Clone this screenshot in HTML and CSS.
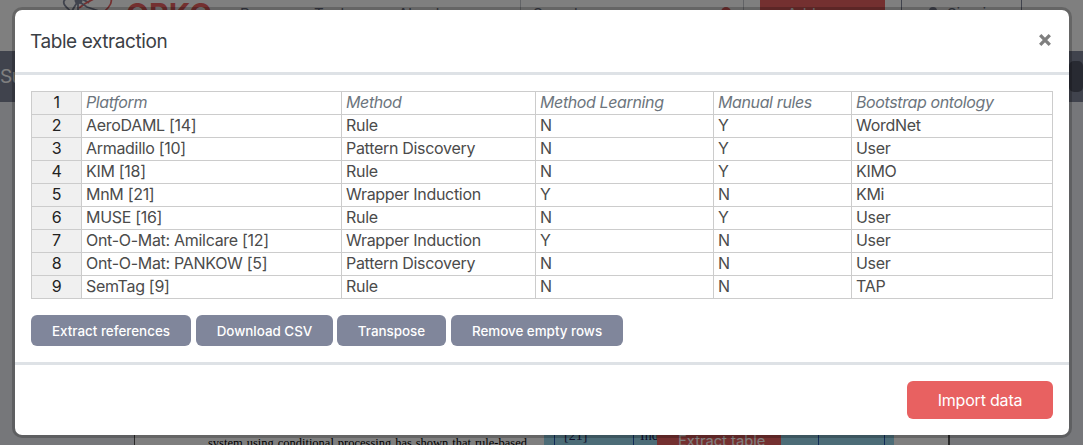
FILE: index.html
```html
<!DOCTYPE html>
<html lang="en">
<head>
<meta charset="utf-8">
<title>Table extraction</title>
<link rel="stylesheet" href="styles.css">
</head>
<body>
<div class="page">
  <header class="header">
    <svg class="logo" viewBox="0 0 52 30" width="52" height="30" fill="none" stroke-width="1.8">
      <path d="M27 3C17-4 5-5 2 1c-2 5 9 13 21 17" stroke="#80869b"/>
      <path d="M17 8C31-3 46-7 49-1c2 5-4 11-12 17" stroke="#e86161"/>
      <path d="M16 1l9 6 15 5M16 1L8 14M16 1v10" stroke="#80869b"/>
      <circle cx="16.500" cy="0" r="4" fill="#80869b"/>
    </svg>
    <span class="brand">ORKG</span>
    <nav class="menu"><span class="papers">Papers</span><span class="tools">Tools</span><span>About</span></nav>
    <div class="search"><span>Search</span><i></i></div>
    <div class="add">Add paper</div>
    <div class="sign">
      <svg width="10" height="14" viewBox="0 0 10 14"><circle cx="5" cy="4" r="4" fill="#80869b"/><path d="M0 14q0-6 5-6t5 6" fill="#80869b"/></svg>
      <span>Sign in</span>
    </div>
  </header>
  <div class="toolbar"><span>Survey table extractor</span><span class="tool"></span></div>
  <main class="content">
    <div class="paper">
      <div class="article">
        <p class="first">rules [20], mostly performs better [13], and a rule</p>
        <p>system using conditional processing has shown that rule-based</p>
      </div>
      <div class="selection">
        <span class="ref">[21]</span><span class="ind">Ind</span><span class="extract">Extract table</span><span class="cell"></span><span class="last"></span>
      </div>
    </div>
  </main>
</div>
<div class="overlay">
  <section class="modal">
    <div class="modal-header">
      <h5>Table extraction</h5>
      <svg class="close" width="14" height="14" viewBox="0 0 14 14"><path d="M2.200 2.200l9.600 9.600M11.800 2.200l-9.600 9.600" stroke="#7f7f7f" stroke-width="3.300"/></svg>
    </div>
    <div class="modal-body">
      <table class="sheet">
        <colgroup><col class="c0"><col class="c1"><col class="c2"><col class="c3"><col class="c4"><col class="c5"></colgroup>
        <tr class="labels"><th>1</th><td>Platform</td><td>Method</td><td>Method Learning</td><td>Manual rules</td><td>Bootstrap ontology</td></tr>
        <tr><th>2</th><td>AeroDAML [14]</td><td>Rule</td><td>N</td><td>Y</td><td>WordNet</td></tr>
        <tr><th>3</th><td>Armadillo [10]</td><td>Pattern Discovery</td><td>N</td><td>Y</td><td>User</td></tr>
        <tr><th>4</th><td>KIM [18]</td><td>Rule</td><td>N</td><td>Y</td><td>KIMO</td></tr>
        <tr><th>5</th><td>MnM [21]</td><td>Wrapper Induction</td><td>Y</td><td>N</td><td>KMi</td></tr>
        <tr><th>6</th><td>MUSE [16]</td><td>Rule</td><td>N</td><td>Y</td><td>User</td></tr>
        <tr><th>7</th><td>Ont-O-Mat: Amilcare [12]</td><td>Wrapper Induction</td><td>Y</td><td>N</td><td>User</td></tr>
        <tr><th>8</th><td>Ont-O-Mat: PANKOW [5]</td><td>Pattern Discovery</td><td>N</td><td>N</td><td>User</td></tr>
        <tr><th>9</th><td>SemTag [9]</td><td>Rule</td><td>N</td><td>N</td><td>TAP</td></tr>
      </table>
      <div class="actions">
        <button class="b1">Extract references</button><button class="b2">Download CSV</button><button class="b3">Transpose</button><button class="b4">Remove empty rows</button>
      </div>
    </div>
    <div class="modal-footer"><button class="import">Import data</button></div>
  </section>
</div>
</body>
</html>
```
FILE: styles.css
```css
* { box-sizing: border-box; }
body { margin: 0; font-family: Inter, "Liberation Sans", sans-serif; overflow: hidden; }
button { border: 0; font-family: inherit; padding: 0; color: #fff; white-space: nowrap; }

.page { height: 445px; overflow: hidden; background: #edeff5; }
.header { display: flex; height: 51px; background: #fff; color: #70758a; font-size: 15px; line-height: 20px; }
.logo { margin-left: 62px; flex: none; }
.brand { margin-left: 12px; width: 114px; color: #e86161; font-size: 30px; font-weight: 700; line-height: 28px; }
.menu { display: flex; width: 280px; padding-top: 4px; }
.papers { width: 74px; }
.tools { width: 84px; }
.search { display: flex; justify-content: space-between; width: 224px; height: 30px; padding: 4px 12px; border: 1px solid #c4c6cd; border-top: 0; }
.search i { width: 10px; height: 10px; margin-top: 3px; border-radius: 50%; background: #e86161; }
.add { width: 125px; height: 30px; margin-left: 16px; padding: 4px 0 0 27px; background: #e86161; color: #fff; }
.sign { display: flex; gap: 9px; width: 121px; height: 30px; margin-left: 16px; padding: 4px 0 0 26px; border: 1px solid #80869b; border-top: 0; }
.sign svg { margin-top: 3px; }
.toolbar { display: flex; justify-content: space-between; height: 51px; padding-top: 10px; background: #80869b; color: #fff; font-size: 19px; letter-spacing: -.8px; line-height: 32px; }
.tool { width: 14px; height: 31px; border-radius: 5px; background: #505565; }
.content { height: 343px; padding-left: 134px; }
.paper { display: flex; width: 816px; height: 343px; padding: 319px 0 0 73px; border: solid #555; border-width: 0 2px 0 1px; background: #fff; }
.article { width: 336px; font: 14px/18px "Liberation Serif", serif; color: #000; }
.article p { margin: 0; white-space: nowrap; text-align: justify; text-align-last: justify; width: 319px; font-size: 12.500px; }
.article .first { padding-left: 20px; height: 13px; line-height: 13px; }
.selection { display: flex; width: 350px; height: 24px; background: #98d8ef; font: 14px/30px "Liberation Serif", serif; color: #225; }
.ref { width: 80px; flex: none; padding-left: 9px; margin-left: 10px; border: solid #2456b0; border-width: 0 1px; }
.ind { width: 23px; flex: none; padding-left: 6px; }
.extract { width: 124px; flex: none; padding-left: 21px; background: #e86161; color: #fff; font: 14.700px/40px Inter, sans-serif; white-space: nowrap; }
.cell { width: 38px; flex: none; border-right: 1px solid #2456b0; }
.last { width: 66px; flex: none; border-right: 1px solid #2456b0; }

.overlay { position: absolute; inset: 0; background: rgba(0, 0, 0, .5); padding: 7px 11px 7px 12px; }
.modal { width: 1060px; height: 431px; border: 3px solid rgba(0, 0, 0, .2); border-radius: 10px; background: #fff; background-clip: padding-box; }
.modal-header { display: flex; justify-content: space-between; height: 65px; padding: 16px 17px 0 16px; border-bottom: 3px solid #dee2e6; }
.modal-header h5 { margin: 0 0 0 -1px; font-size: 19px; letter-spacing: -.42px; line-height: 32px; font-weight: 400; color: #3b4045; }
.close { margin: 7px 0 0; }
.modal-body { height: 290px; padding: 16px 16px 0; border-bottom: 3px solid #dee2e6; }
.sheet { width: 1022px; table-layout: fixed; border-collapse: collapse; font-size: 16px; letter-spacing: -.3px; line-height: 20px; color: #4b4b4b; }
.c0 { width: 50px; }
.c1 { width: 260px; }
.c2 { width: 194px; }
.c3 { width: 178px; }
.c4 { width: 138px; }
.c5 { width: 201px; }
.sheet tr { height: 23px; }
.sheet td, .sheet th { border: 1px solid #ccc; padding: 0 4px 2px; text-align: left; font-weight: 400; white-space: nowrap; }
.sheet th { background: #f0f0f0; color: #222; text-align: center; }
.labels td { font-style: italic; letter-spacing: -.38px; color: #6c757d; }
.actions { display: flex; margin-top: 16px; }
.actions button { height: 31px; margin-right: 5px; border-radius: 6px; background: #80869b; font-size: 13.400px; font-weight: 500; }
.b1 { width: 160px; }
.actions .b2 { width: 137px; margin-right: 4px; }
.b3 { width: 109px; }
.b4 { width: 172px; }
.modal-footer { display: flex; justify-content: flex-end; padding: 16px; }
.import { width: 146px; height: 38px; border-radius: 6px; background: #e86161; font-size: 16px; letter-spacing: -.2px; }
```
